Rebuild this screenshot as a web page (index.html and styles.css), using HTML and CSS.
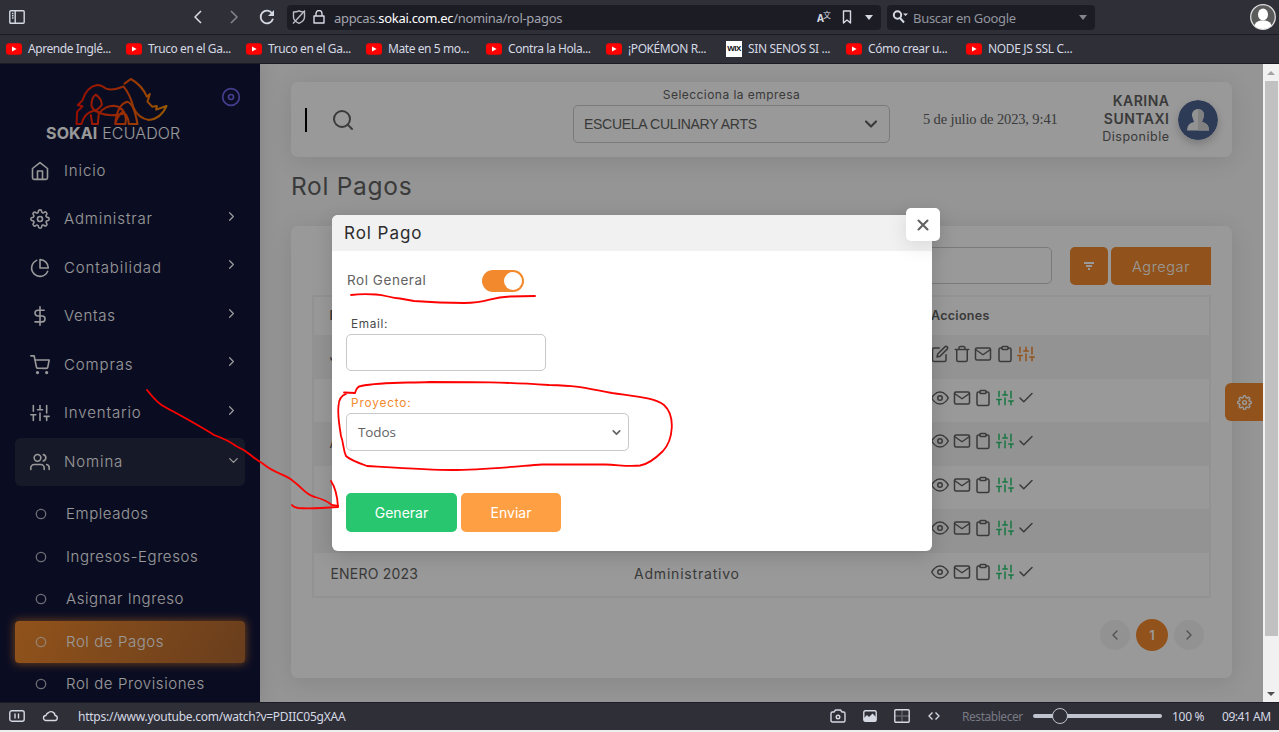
FILE: index.html
```
<!DOCTYPE html>
<html lang="es">
<head>
<meta charset="utf-8">
<title>Rol Pagos</title>
<link rel="stylesheet" href="styles.css">
</head>
<body>
<svg class="defs" width="0" height="0">
  <symbol id="home" viewBox="0 0 24 24"><path d="M3 9l9-7 9 7v11a2 2 0 0 1-2 2H5a2 2 0 0 1-2-2z"/><path d="M9 22V12h6v10"/></symbol>
  <symbol id="gear" viewBox="0 0 24 24"><circle cx="12" cy="12" r="3"/><path d="M19.4 15a1.65 1.65 0 0 0 .33 1.82l.06.06a2 2 0 0 1-2.83 2.83l-.06-.06a1.65 1.65 0 0 0-2.8 1.17V21a2 2 0 0 1-4 0v-.09A1.65 1.65 0 0 0 9 19.4a1.65 1.65 0 0 0-1.82.33l-.06.06a2 2 0 0 1-2.83-2.83l.06-.06a1.65 1.65 0 0 0-1.17-2.8H3a2 2 0 0 1 0-4h.09A1.65 1.65 0 0 0 4.6 9a1.65 1.65 0 0 0-.33-1.82l-.06-.06a2 2 0 0 1 2.83-2.83l.06.06A1.65 1.65 0 0 0 9 4.68a1.65 1.65 0 0 0 1-1.51V3a2 2 0 0 1 4 0v.09a1.65 1.65 0 0 0 2.8 1.17l.06-.06a2 2 0 0 1 2.83 2.83l-.06.06A1.65 1.65 0 0 0 19.4 9a1.65 1.65 0 0 0 1.51 1H21a2 2 0 0 1 0 4h-.09a1.65 1.65 0 0 0-1.51 1z"/></symbol>
  <symbol id="pie" viewBox="0 0 24 24"><path d="M21.21 15.89A10 10 0 1 1 8 2.83"/><path d="M22 12A10 10 0 0 0 12 2v10z"/></symbol>
  <symbol id="dollar" viewBox="0 0 24 24"><path d="M12 1v22M17 5H9.5a3.5 3.5 0 0 0 0 7h5a3.5 3.5 0 0 1 0 7H6"/></symbol>
  <symbol id="cart" viewBox="0 0 24 24"><circle cx="9" cy="21" r="1"/><circle cx="20" cy="21" r="1"/><path d="M1 1h4l2.68 13.39a2 2 0 0 0 2 1.61h9.72a2 2 0 0 0 2-1.61L23 6H6"/></symbol>
  <symbol id="sliders" viewBox="0 0 24 24"><path d="M4 21v-7M4 10V3M12 21v-9M12 8V3M20 21v-5M20 12V3M1 14h6M9 8h6M17 16h6"/></symbol>
  <symbol id="users" viewBox="0 0 24 24"><path d="M17 21v-2a4 4 0 0 0-4-4H5a4 4 0 0 0-4 4v2"/><circle cx="9" cy="7" r="4"/><path d="M23 21v-2a4 4 0 0 0-3-3.87M16 3.13a4 4 0 0 1 0 7.75"/></symbol>
  <symbol id="right" viewBox="0 0 24 24"><path d="M9 18l6-6-6-6"/></symbol>
  <symbol id="left" viewBox="0 0 24 24"><path d="M15 18l-6-6 6-6"/></symbol>
  <symbol id="down" viewBox="0 0 24 24"><path d="M6 9l6 6 6-6"/></symbol>
  <symbol id="circle" viewBox="0 0 12 12"><circle cx="6" cy="6" r="4.700"/></symbol>
  <symbol id="disc" viewBox="0 0 24 24"><circle cx="12" cy="12" r="10"/><circle cx="12" cy="12" r="3"/></symbol>
  <symbol id="search" viewBox="0 0 24 24"><circle cx="11" cy="11" r="8"/><path d="M21 21l-4.35-4.35"/></symbol>
  <symbol id="edit" viewBox="0 0 24 24"><path d="M11 4H4a2 2 0 0 0-2 2v14a2 2 0 0 0 2 2h14a2 2 0 0 0 2-2v-7"/><path d="M18.5 2.5a2.12 2.12 0 0 1 3 3L12 15l-4 1 1-4z"/></symbol>
  <symbol id="trash" viewBox="0 0 24 24"><path d="M3 6h18M19 6v14a2 2 0 0 1-2 2H7a2 2 0 0 1-2-2V6m3 0V4a2 2 0 0 1 2-2h4a2 2 0 0 1 2 2v2"/></symbol>
  <symbol id="mail" viewBox="0 0 24 24"><rect x="2" y="4" width="20" height="16" rx="2"/><path d="M22 6l-10 7L2 6"/></symbol>
  <symbol id="clip" viewBox="0 0 24 24"><path d="M16 4h2a2 2 0 0 1 2 2v14a2 2 0 0 1-2 2H6a2 2 0 0 1-2-2V6a2 2 0 0 1 2-2h2"/><rect x="8" y="2" width="8" height="4" rx="1"/></symbol>
  <symbol id="eye" viewBox="0 0 24 24"><path d="M1 12s4-8 11-8 11 8 11 8-4 8-11 8-11-8-11-8z"/><circle cx="12" cy="12" r="3"/></symbol>
  <symbol id="check" viewBox="0 0 24 24"><path d="M20 6L9 17l-5-5"/></symbol>
  <symbol id="x" viewBox="0 0 24 24"><path d="M18 6L6 18M6 6l12 12"/></symbol>
  <symbol id="yt" viewBox="0 0 16 16"><rect x="0" y="2.3" width="16" height="11.4" rx="3" fill="#f00" stroke="none"/><path d="M6 5.5v5L10.6 8z" fill="#fff" stroke="none"/></symbol>
</svg>

<header class="toolbar">
  <svg class="ic panel" viewBox="0 0 16 14"><rect x=".8" y=".8" width="14.4" height="12.4" rx="1"/><path d="M6.2 1v12M3 3.5h1.5M3 5.7h1.5M3 8h1.5"/></svg>
  <svg class="ic back" viewBox="0 0 10 14"><path d="M8 1L2 7l6 6"/></svg>
  <svg class="ic fwd" viewBox="0 0 10 14"><path d="M2 1l6 6-6 6"/></svg>
  <svg class="ic reload" viewBox="0 0 16 16"><path d="M13.2 4.5A6.3 6.3 0 1 0 14 9.8"/><path class="solid" d="M15 1v6H9z"/></svg>
  <div class="urlbox">
    <svg class="ic shield" viewBox="0 0 14 14"><path d="M1.500 2Q5 2 7 .8 9 2 12.500 2V7q0 4-5.500 6.300Q1.500 11 1.500 7zM1 13.500L13 .5"/></svg>
    <svg class="ic lock" viewBox="0 0 12 14"><rect x="1" y="6" width="10" height="7"/><path d="M3 6V3.500a3 3 0 0 1 6 0V6"/></svg>
    <span class="url">appcas.<b>sokai.com.ec</b>/nomina/rol-pagos</span>
    <span class="tr"><b>A</b><i>文</i></span>
    <svg class="ic mark" viewBox="0 0 10 14"><path d="M1.500 1h7v12L5 10l-3.500 3z"/></svg>
    <span class="caret"></span>
  </div>
  <div class="searchbox">
    <svg class="ic mag" viewBox="0 0 16 14"><circle cx="5.500" cy="5" r="3.700"/><path d="M8 8l4 4.500"/><path class="solid" d="M11 3.500h5L13.500 6z"/></svg>
    <span>Buscar en Google</span>
    <i class="caret dim"></i>
  </div>
  <svg class="face" viewBox="0 0 26 26"><circle cx="13" cy="13" r="12.300" fill="#5b5b5b" stroke="#ddd" stroke-width="1.300"/><ellipse cx="13" cy="10.500" rx="5" ry="6" fill="#fff"/><path d="M4.500 21.500q1-4 6-5h5q5 1 6 5A12 12 0 0 1 4.500 21.500z" fill="#fff"/></svg>
</header>
<nav class="bookmarks">
  <a><svg><use href="#yt"/></svg><span>Aprende Inglé...</span></a>
  <a><svg><use href="#yt"/></svg><span>Truco en el Ga...</span></a>
  <a><svg><use href="#yt"/></svg><span>Truco en el Ga...</span></a>
  <a><svg><use href="#yt"/></svg><span>Mate en 5 mo...</span></a>
  <a><svg><use href="#yt"/></svg><span>Contra la Hola...</span></a>
  <a><svg><use href="#yt"/></svg><span>¡POKÉMON R...</span></a>
  <a><b class="wix">WIX</b><span class="tight">SIN SENOS SI ...</span></a>
  <a><svg><use href="#yt"/></svg><span>Cómo crear u...</span></a>
  <a><svg><use href="#yt"/></svg><span class="tight">NODE JS SSL C...</span></a>
</nav>

<main class="viewport">
  <aside class="sidebar">
    <div class="brand">
      <div class="logo">
        <svg viewBox="222 38 284 150"><defs><linearGradient id="lg" x1="222" x2="506" y1="0" y2="0" gradientUnits="userSpaceOnUse"><stop offset="0" stop-color="#ff1500"/><stop offset=".5" stop-color="#ff4b08"/><stop offset="1" stop-color="#ff9800"/></linearGradient></defs>
        <g fill="none" stroke="url(#lg)" stroke-width="6" stroke-linejoin="round" stroke-linecap="round"><path d="M295 143Q281 141 274 125Q273 99 287 91Q304 103 305 121Q296 136 276 141Q253 147 244 179H229L231 142 247 126 233 122 247 108Q259 68 291 62Q304 62 318 73Q337 80 370 66Q390 90 400 130Q413 161 446 167Q483 163 499 125L468 136 470 125 456 127 442 112 449 89 440 97Q425 62 392 44L373 58"/><path d="M272 152L276 179H293L296 147Q315 124 341 124Q373 127 377 163L376 179H345Q351 120 381 112Q401 116 412 179H386Q383 148 366 143Q351 157 345 179M298 146Q330 158 369 148"/></g></svg>
        <p><b>SOKAI</b> <span>ECUADOR</span></p>
      </div>
      <svg class="ic disc"><use href="#disc"/></svg>
    </div>
    <ul class="menu">
      <li><svg class="ic"><use href="#home"/></svg><span>Inicio</span></li>
      <li><svg class="ic"><use href="#gear"/></svg><span>Administrar</span><svg class="ic chev"><use href="#right"/></svg></li>
      <li><svg class="ic"><use href="#pie"/></svg><span>Contabilidad</span><svg class="ic chev"><use href="#right"/></svg></li>
      <li><svg class="ic"><use href="#dollar"/></svg><span class="flat">Ventas</span><svg class="ic chev"><use href="#right"/></svg></li>
      <li><svg class="ic"><use href="#cart"/></svg><span>Compras</span><svg class="ic chev"><use href="#right"/></svg></li>
      <li><svg class="ic"><use href="#sliders"/></svg><span>Inventario</span><svg class="ic chev"><use href="#right"/></svg></li>
      <li class="open"><svg class="ic"><use href="#users"/></svg><span>Nomina</span><svg class="ic chev"><use href="#down"/></svg></li>
    </ul>
    <ul class="submenu">
      <li><svg class="ic"><use href="#circle"/></svg><span>Empleados</span></li>
      <li><svg class="ic"><use href="#circle"/></svg><span>Ingresos-Egresos</span></li>
      <li><svg class="ic"><use href="#circle"/></svg><span>Asignar Ingreso</span></li>
      <li class="active"><svg class="ic"><use href="#circle"/></svg><span>Rol de Pagos</span></li>
      <li><svg class="ic"><use href="#circle"/></svg><span>Rol de Provisiones</span></li>
    </ul>
  </aside>

  <section class="content">
    <div class="card topbar">
      <i class="bar"></i>
      <svg class="ic find"><use href="#search"/></svg>
      <div class="company"><label>Selecciona la empresa</label><div class="field select"><span>ESCUELA CULINARY ARTS</span><svg class="ic"><use href="#down"/></svg></div></div>
      <time>5 de julio de 2023, 9:41</time>
      <div class="user"><b>KARINA</b><b>SUNTAXI</b><span>Disponible</span></div>
      <svg class="avatar" viewBox="0 0 40 40"><circle cx="20" cy="20" r="20" fill="#4b6390"/><path d="M20 9a6 6 0 0 1 5.500 8.500L24 22q7 1 7 8.500H9Q9 23 16 22l-1.500-4.500A6 6 0 0 1 20 9z" fill="#f4f4f4"/><path d="M20 9a6 6 0 0 1 5.500 8.500L24 22q7 1 7 8.500H20z" fill="#d8d8d8"/></svg>
    </div>
    <h1>Rol Pagos</h1>
    <div class="card list">
      <div class="tools"><div class="field"></div><button class="filter"><svg class="ic" viewBox="0 0 10 10"><path d="M0 2h10M2 5h6M4 8h2"/></svg></button><button class="add">Agregar</button></div>
      <table>
        <thead><tr><th class="c1">P</th><th class="c2"></th><th class="c3">Acciones</th></tr></thead>
        <tbody>
          <tr><td>J</td><td></td><td><div class="acts"><svg class="ic"><use href="#edit"/></svg><svg class="ic"><use href="#trash"/></svg><svg class="ic"><use href="#mail"/></svg><svg class="ic"><use href="#clip"/></svg><svg class="ic orange"><use href="#sliders"/></svg></div></td></tr>
          <tr><td></td><td></td><td><div class="acts"><svg class="ic"><use href="#eye"/></svg><svg class="ic"><use href="#mail"/></svg><svg class="ic"><use href="#clip"/></svg><svg class="ic green"><use href="#sliders"/></svg><svg class="ic"><use href="#check"/></svg></div></td></tr>
          <tr><td>A</td><td></td><td><div class="acts"><svg class="ic"><use href="#eye"/></svg><svg class="ic"><use href="#mail"/></svg><svg class="ic"><use href="#clip"/></svg><svg class="ic green"><use href="#sliders"/></svg><svg class="ic"><use href="#check"/></svg></div></td></tr>
          <tr><td></td><td></td><td><div class="acts"><svg class="ic"><use href="#eye"/></svg><svg class="ic"><use href="#mail"/></svg><svg class="ic"><use href="#clip"/></svg><svg class="ic green"><use href="#sliders"/></svg><svg class="ic"><use href="#check"/></svg></div></td></tr>
          <tr><td></td><td></td><td><div class="acts"><svg class="ic"><use href="#eye"/></svg><svg class="ic"><use href="#mail"/></svg><svg class="ic"><use href="#clip"/></svg><svg class="ic green"><use href="#sliders"/></svg><svg class="ic"><use href="#check"/></svg></div></td></tr>
          <tr><td class="month">ENERO 2023</td><td class="area">Administrativo</td><td><div class="acts"><svg class="ic"><use href="#eye"/></svg><svg class="ic"><use href="#mail"/></svg><svg class="ic"><use href="#clip"/></svg><svg class="ic green"><use href="#sliders"/></svg><svg class="ic"><use href="#check"/></svg></div></td></tr>
        </tbody>
      </table>
      <div class="pager"><span><svg class="ic"><use href="#left"/></svg></span><span class="on">1</span><span><svg class="ic"><use href="#right"/></svg></span></div>
    </div>
  </section>

  <div class="scroll"><i class="up"></i><div class="thumb"></div><i class="dn"></i></div>
  <div class="custom"><svg class="ic"><use href="#gear"/></svg></div>
  <div class="overlay"></div>

  <div class="modal">
    <button class="close"><svg class="ic"><use href="#x"/></svg></button>
    <h2>Rol Pago</h2>
    <div class="body">
      <div class="general"><span>Rol General</span><div class="toggle"><i></i></div></div>
      <label>Email:</label>
      <div class="field email"></div>
      <label class="proy">Proyecto:</label>
      <div class="field select todos"><span>Todos</span><svg class="ic"><use href="#down"/></svg></div>
      <div class="btns"><button class="gen">Generar</button><button class="env">Enviar</button></div>
    </div>
  </div>
</main>

<footer class="status">
  <svg class="ic s1" viewBox="0 0 16 12"><rect x=".8" y=".8" width="14.400" height="10.400" rx="2"/><path d="M6 3.500v5M9.500 3.500v5"/></svg>
  <svg class="ic s2" viewBox="0 0 16 12"><path d="M4 10.500h8.500a2.500 2.500 0 0 0 .5-5 4 4 0 0 0-7-2.500 3 3 0 0 0-2 2.500 2.500 2.500 0 0 0 0 5z"/></svg>
  <span class="link">https://www.youtube.com/watch?v=PDIIC05gXAA</span>
  <svg class="ic s3" viewBox="0 0 16 14"><path d="M1 4.500q0-1.500 1.500-1.500H4l1.500-2h5L12 3h1.500Q15 3 15 4.500v7q0 1.500-1.500 1.500h-11Q1 13 1 11.500z"/><circle cx="8" cy="8" r="1.800"/></svg>
  <svg class="ic s4" viewBox="0 0 14 12"><rect x=".8" y=".8" width="12.400" height="10.400" rx="1.500"/><path class="solid" d="M1 11V8l3-3 2 2 3.500-3.500L13 7v4z"/></svg>
  <svg class="ic s5" viewBox="0 0 16 14"><rect x=".8" y=".8" width="14.400" height="12.400" rx="1"/><path opacity=".3" d="M8 1v12M1 7h14"/></svg>
  <svg class="ic s6" viewBox="0 0 12 10"><path d="M4.500 1.500L1 5l3.500 3.500M7.500 1.500L11 5 7.500 8.500"/></svg>
  <span class="reset">Restablecer</span>
  <div class="zoom"><i></i></div>
  <span class="pct">100 %</span>
  <span class="clock">09:41 AM</span>
</footer>

<svg class="ink" viewBox="0 0 1279 732">
  <path d="M351 295Q362 293.500 376 294.500C386 295 390 298 400 298.500L414 301Q440 303 464 303C490 303 488 297 510 296.500L535 296"/>
  <path d="M344 392.500L355 393Q357 386 361 386C380 382 400 383 430 382C480 382 500 382 549 385C580 386 580 387 612 393C640 397 655 398 664 405C676 416 673 440 663 451Q650 464 640 465.500C628 467 620 465 605 464.500H542C510 467 480 470 452 470C430 470 400 468 367 466Q350 460 346 456C343 450 344 444 341 436C339 424 338 410 338.500 406Q339 396 346 394"/>
  <path d="M147 390Q158 404 165 407C185 418 200 426 214 435Q228 440 236 446C250 452 252 458 262 463C275 474 285 474 293 481C303 488 305 495 315 497Q326 500 332 505L338 506"/>
  <path d="M331 481Q337 490 338 507C325 508 310 509 298 508Q293 507 292 505"/>
</svg>
</body>
</html>
```
FILE: styles.css
```
* { box-sizing: border-box; }
body { margin: 0; width: 1279px; height: 732px; overflow: hidden; display: flex; flex-direction: column; background: #eeeef0; font-family: Inter, "Open Sans", sans-serif; color: #626262; position: relative; }
ul, h1, h2, p { margin: 0; padding: 0; list-style: none; }
button { border: 0; padding: 0; font: inherit; color: #fff; }
.defs { position: absolute; }
.ic { fill: none; stroke: currentColor; stroke-width: 2; stroke-linecap: round; stroke-linejoin: round; flex: none; }
.solid { fill: currentColor; stroke: none; }

.toolbar, .bookmarks, .status { font-family: "Noto Sans", "Open Sans", sans-serif; color: #d5d9e4; background: #2f2f37; display: flex; align-items: center; flex: none; white-space: nowrap; }
.toolbar { height: 35px; border-bottom: 1px solid #1c1c24; padding-left: 9px; }
.toolbar .ic, .status .ic { stroke-width: 1.4; stroke-linecap: butt; }
.panel { width: 16px; height: 14px; }
.back { width: 10px; height: 14px; margin-left: 168px; }
.fwd { width: 10px; height: 14px; margin-left: 26px; opacity: .5; }
.toolbar .back, .toolbar .fwd { stroke-width: 1.6; }
.reload { width: 16px; height: 16px; margin-left: 20px; }
.toolbar .reload { stroke-width: 1.8; }
.urlbox { width: 594px; height: 25px; margin-left: 12px; border-radius: 4px; background: #1c1c24; display: flex; align-items: center; padding: 0 8px 0 5px; }
.shield { width: 14px; height: 14px; opacity: .85; }
.lock { width: 12px; height: 14px; margin-left: 7px; }
.url { margin-left: 9px; flex: 1; font-size: 13px; letter-spacing: -.31px; color: #a3a5ae; padding-top: 2px; }
.url b { font-weight: 400; color: #fff; }
.tr { width: 14px; font-size: 10px; height: 16px; display: flex; align-items: flex-end; }
.tr i { font: 8px "Noto Sans CJK SC", sans-serif; align-self: flex-start; margin-left: -1px; }
.mark { width: 10px; height: 14px; margin: 0 13px 0 11px; }
.caret { border: 4px solid transparent; border-top: 5px solid #d5d9e4; border-bottom: 0; }
.dim { opacity: .55; }
.searchbox { width: 208px; height: 25px; margin-left: 6px; background: #1c1c24; border-radius: 4px; display: flex; align-items: center; padding: 0 8px 0 5px; font-size: 13px; color: #93959e; }
.searchbox span { flex: 1; margin-left: 5px; padding-top: 2px; letter-spacing: -.3px; }
.toolbar .mag { width: 16px; height: 14px; color: #d5d9e4; stroke-width: 2; }
.face { width: 26px; height: 26px; margin-left: 155px; flex: none; }
.bookmarks { height: 29px; padding: 0 0 1px 6px; border-bottom: 1px solid #1c1c24; }
.bookmarks a { width: 120px; display: flex; align-items: center; gap: 6px; font-size: 12px; letter-spacing: -.42px; }
.bookmarks svg { width: 16px; height: 16px; }
.bookmarks .tight { letter-spacing: -.35px; }
.wix { width: 16px; height: 16px; background: #fff; color: #111; font: bold 8px/16px "Liberation Sans", sans-serif; text-align: center; letter-spacing: -.5px; }

.viewport { height: 638px; flex: none; position: relative; display: flex; background: #f8f8f8; overflow: hidden; }
.sidebar { width: 260px; flex: none; background: #12163a; color: #fff; box-shadow: 0 0 20px rgba(0,0,0,.12); }
.brand { height: 82.5px; display: flex; justify-content: space-between; padding: 13px 19px 0 46px; }
.logo { width: 136px; display: flex; flex-direction: column; }
.logo svg { width: 95px; height: 50px; margin-left: 28px; }
.logo p { font-size: 16px; line-height: 16px; white-space: nowrap; margin-top: -2px; letter-spacing: .15px; }
.logo p span { font-weight: 300; }
.disc { width: 20px; height: 20px; margin-top: 10px; color: #7367f0; }
.menu { padding: 0 15px; font-size: 15px; font-weight: 300; }
.menu li { height: 48.5px; display: flex; align-items: center; padding: 0 4px 0 15px; border-radius: 6px; }
.menu li > .ic:first-child { width: 20px; height: 20px; margin-right: 14px; stroke-width: 1.9; }
.menu span { flex: 1; letter-spacing: .88px; padding-bottom: 1px; }
.menu .flat { letter-spacing: .7px; }
.menu .chev { width: 15px; height: 15px; margin: -6px 2px 0 0; }
.open { background: #262a44; }
.menu .open .chev { margin: -2px 0 0; }
.submenu { padding: 7px 15px 0; font-size: 15px; font-weight: 300; letter-spacing: .58px; }
.submenu li { height: 42.5px; display: flex; align-items: center; padding-left: 20px; gap: 19px; border-radius: 4px; }
.submenu span { padding-bottom: 1px; }
.submenu .ic { width: 12px; height: 12px; opacity: .7; stroke-width: 1.3; }
.submenu .active { background: linear-gradient(118deg, #f28a2d, rgba(242,138,45,.7)); box-shadow: 0 0 8px 1px rgba(242,138,45,.7); }

.content { width: 1003px; padding: 18px 31px 0; }
.card { background: #fff; border-radius: 7px; box-shadow: 0 4px 25px rgba(0,0,0,.1); width: 941px; }
.topbar { height: 75px; display: flex; align-items: center; padding: 0 14px; }
.bar { width: 2px; height: 24px; background: #000; }
.find { width: 24px; height: 24px; margin-left: 24px; stroke-width: 2; }
.company { width: 317px; height: 69px; margin: 0 33px 0 218px; text-align: center; }
.company label { display: block; font-size: 12px; line-height: 20px; height: 20px; letter-spacing: .45px; }
.field { border: 1px solid #c8c8c8; border-radius: 5px; height: 38px; background: #fff; }
.select { display: flex; align-items: center; justify-content: space-between; padding: 0 8px 0 10px; }
.company .field { font-family: "Liberation Sans", sans-serif; font-size: 14px; border-color: #ccc; letter-spacing: -.3px; }
.company .ic { width: 20px; height: 20px; stroke-width: 2.600; }
time { width: 135px; font: 14.500px "Liberation Serif", serif; white-space: nowrap; letter-spacing: -.13px; }
.user { flex: 1; text-align: right; display: flex; flex-direction: column; font-size: 14px; line-height: 18px; margin: -2px 9px 0 0; }
.user b { font-weight: 600; letter-spacing: .5px; margin-right: -.5px; }
.user span { font-size: 12.500px; letter-spacing: .5px; margin-right: -.5px; }
.avatar { width: 40px; height: 40px; border-radius: 50%; box-shadow: 0 4px 8px rgba(0,0,0,.2); }
h1 { font-size: 24.500px; font-weight: 400; height: 69px; line-height: 59px; padding-left: 0; letter-spacing: .7px; }
.list { height: 452px; padding: 21px 21px 0; }
.tools { display: flex; height: 38px; justify-content: flex-end; }
.tools .field { width: 280px; height: 37px; border-color: #ccc; margin-right: 18px; }
.tools button { background: #f28a2d; height: 38px; }
.filter { width: 38px; border-radius: 5px; margin-right: 3px; display: flex; align-items: center; justify-content: center; }
.filter .ic { width: 10px; height: 10px; stroke-linecap: butt; }
.add { width: 100px; border-radius: 5px 0 0 5px; font-size: 14.500px; font-weight: 300; letter-spacing: .6px; }
table { width: 899px; margin-top: 10px; border: 2px solid #f3f3f3; border-collapse: separate; border-spacing: 0; table-layout: fixed; font-size: 14px; }
th, td { padding: 0 0 2px 17px; text-align: left; height: 43.500px; white-space: nowrap; }
th { height: 38px; font-size: 12.500px; font-weight: 600; letter-spacing: .3px; }
tr > :first-child { padding-left: 15.500px; }
.c1 { width: 303px; }
.c2 { width: 297px; }
tbody tr:nth-child(odd) td { background: #f6f6f6; }
td.month { letter-spacing: .2px; padding-left: 16.500px; }
.area { letter-spacing: .8px; }
.acts { display: flex; gap: 3.600px; margin-top: -3px; }
.acts .ic { width: 18px; height: 18px; }
.orange { color: #f28a2d; }
.green { color: #28c76f; }
.pager { display: flex; justify-content: flex-end; align-items: center; gap: 6px; margin: 21px 7px 0 0; }
.pager span { width: 30px; height: 30px; border-radius: 50%; background: #f3f3f3; display: flex; align-items: center; justify-content: center; color: #888; }
.pager .ic { width: 16px; height: 16px; }
.pager .on { width: 32px; height: 32px; background: #f28a2d; color: #fff; font-size: 13px; font-weight: 600; }

.scroll { width: 16px; background: #f1f1f1; position: relative; z-index: 3; display: flex; flex-direction: column; align-items: center; padding: 7px 0 6px; }
.scroll i { border: 4px solid transparent; }
.up { border-bottom-color: #a3a3a3 !important; border-top: 0 !important; }
.thumb { width: 13px; height: 555px; margin-top: 6px; background: #c1c1c1; }
.dn { border-top-color: #505050 !important; border-bottom: 0 !important; margin-top: auto; }
.custom { position: absolute; left: 1225px; top: 319px; width: 38px; height: 38px; border-radius: 6px 0 0 6px; background: #f28a2d; color: #fff; display: flex; align-items: center; justify-content: center; }
.custom .ic { width: 15px; height: 15px; stroke-width: 2.300; }
.overlay { position: absolute; inset: 0 16px 0 0; background: rgba(0,0,0,.4); }

.modal { position: absolute; left: 332px; top: 151px; width: 600px; height: 336px; background: #fff; border-radius: 6px; box-shadow: 0 5px 20px rgba(0,0,0,.15); }
.modal h2 { height: 36px; line-height: 36px; background: #f1f1f1; border-radius: 6px 6px 0 0; padding-left: 12px; font-size: 17px; font-weight: 400; color: #2c2c2c; letter-spacing: .95px; }
.close { position: absolute; left: 574px; top: -7px; width: 34px; height: 33px; border-radius: 5px; background: #fff; color: #626262; display: flex; align-items: center; justify-content: center; box-shadow: 0 5px 20px rgba(0,0,0,.1); }
.close .ic { width: 18px; height: 18px; stroke-width: 2.800; }
.body { padding: 19px 14px 0; }
.general { height: 22px; display: flex; align-items: center; justify-content: space-between; width: 178px; padding-left: 1px; font-size: 13.500px; letter-spacing: .55px; }
.general span { padding-bottom: 2px; }
.toggle { width: 42px; height: 22px; border-radius: 11px; background: #f28a2d; padding: 2px; display: flex; justify-content: flex-end; }
.toggle i { width: 18px; height: 18px; border-radius: 50%; background: #fff; }
.modal label { display: block; padding-left: 5px; font-size: 11.800px; line-height: 20px; margin-top: 22px; color: #4a4a4a; letter-spacing: .65px; }
.email { width: 200px; height: 37px; }
.modal .proy { color: #f28a2d; letter-spacing: .85px; }
.todos { width: 283px; font-family: "Open Sans", sans-serif; font-size: 13.500px; padding: 0 5px 0 11px; letter-spacing: -.1px; }
.todos .ic { width: 13px; height: 13px; stroke-width: 3; }
.btns { display: flex; gap: 4px; margin-top: 42px; font-size: 14px; letter-spacing: .35px; }
.btns button { height: 39px; border-radius: 5px; }
.gen { width: 111px; background: #28c76f; }
.env { width: 100px; background: #ff9f43; }

.status { height: 28px; border-top: 1px solid #1c1c24; padding: 0 0 1px 9px; font-size: 12px; }
.s1 { width: 16px; height: 12px; }
.s2 { width: 16px; height: 12px; margin-left: 17px; }
.link { width: 752px; margin-left: 20px; letter-spacing: -.25px; }
.s3 { width: 16px; height: 14px; }
.s4 { width: 14px; height: 12px; margin-left: 17px; }
.s5 { width: 16px; height: 14px; margin-left: 17px; }
.s6 { width: 12px; height: 10px; margin-left: 18px; }
.reset { width: 71px; margin-left: 22px; color: #777983; letter-spacing: -.45px; }
.zoom { width: 129px; height: 4px; background: #c0c4cf; border-radius: 2px; display: flex; align-items: center; }
.zoom i { width: 16px; height: 16px; margin-left: 19px; background: #2f2f37; border: 1.500px solid #c0c4cf; border-radius: 50%; flex: none; }
.pct { width: 50px; margin-left: 10px; letter-spacing: -.3px; }
.clock { letter-spacing: -.45px; }
.ink { position: absolute; left: 0; top: 0; width: 1279px; height: 732px; fill: none; stroke: #f00; stroke-width: 1.800; stroke-linecap: round; stroke-linejoin: round; pointer-events: none; z-index: 9; }
```
